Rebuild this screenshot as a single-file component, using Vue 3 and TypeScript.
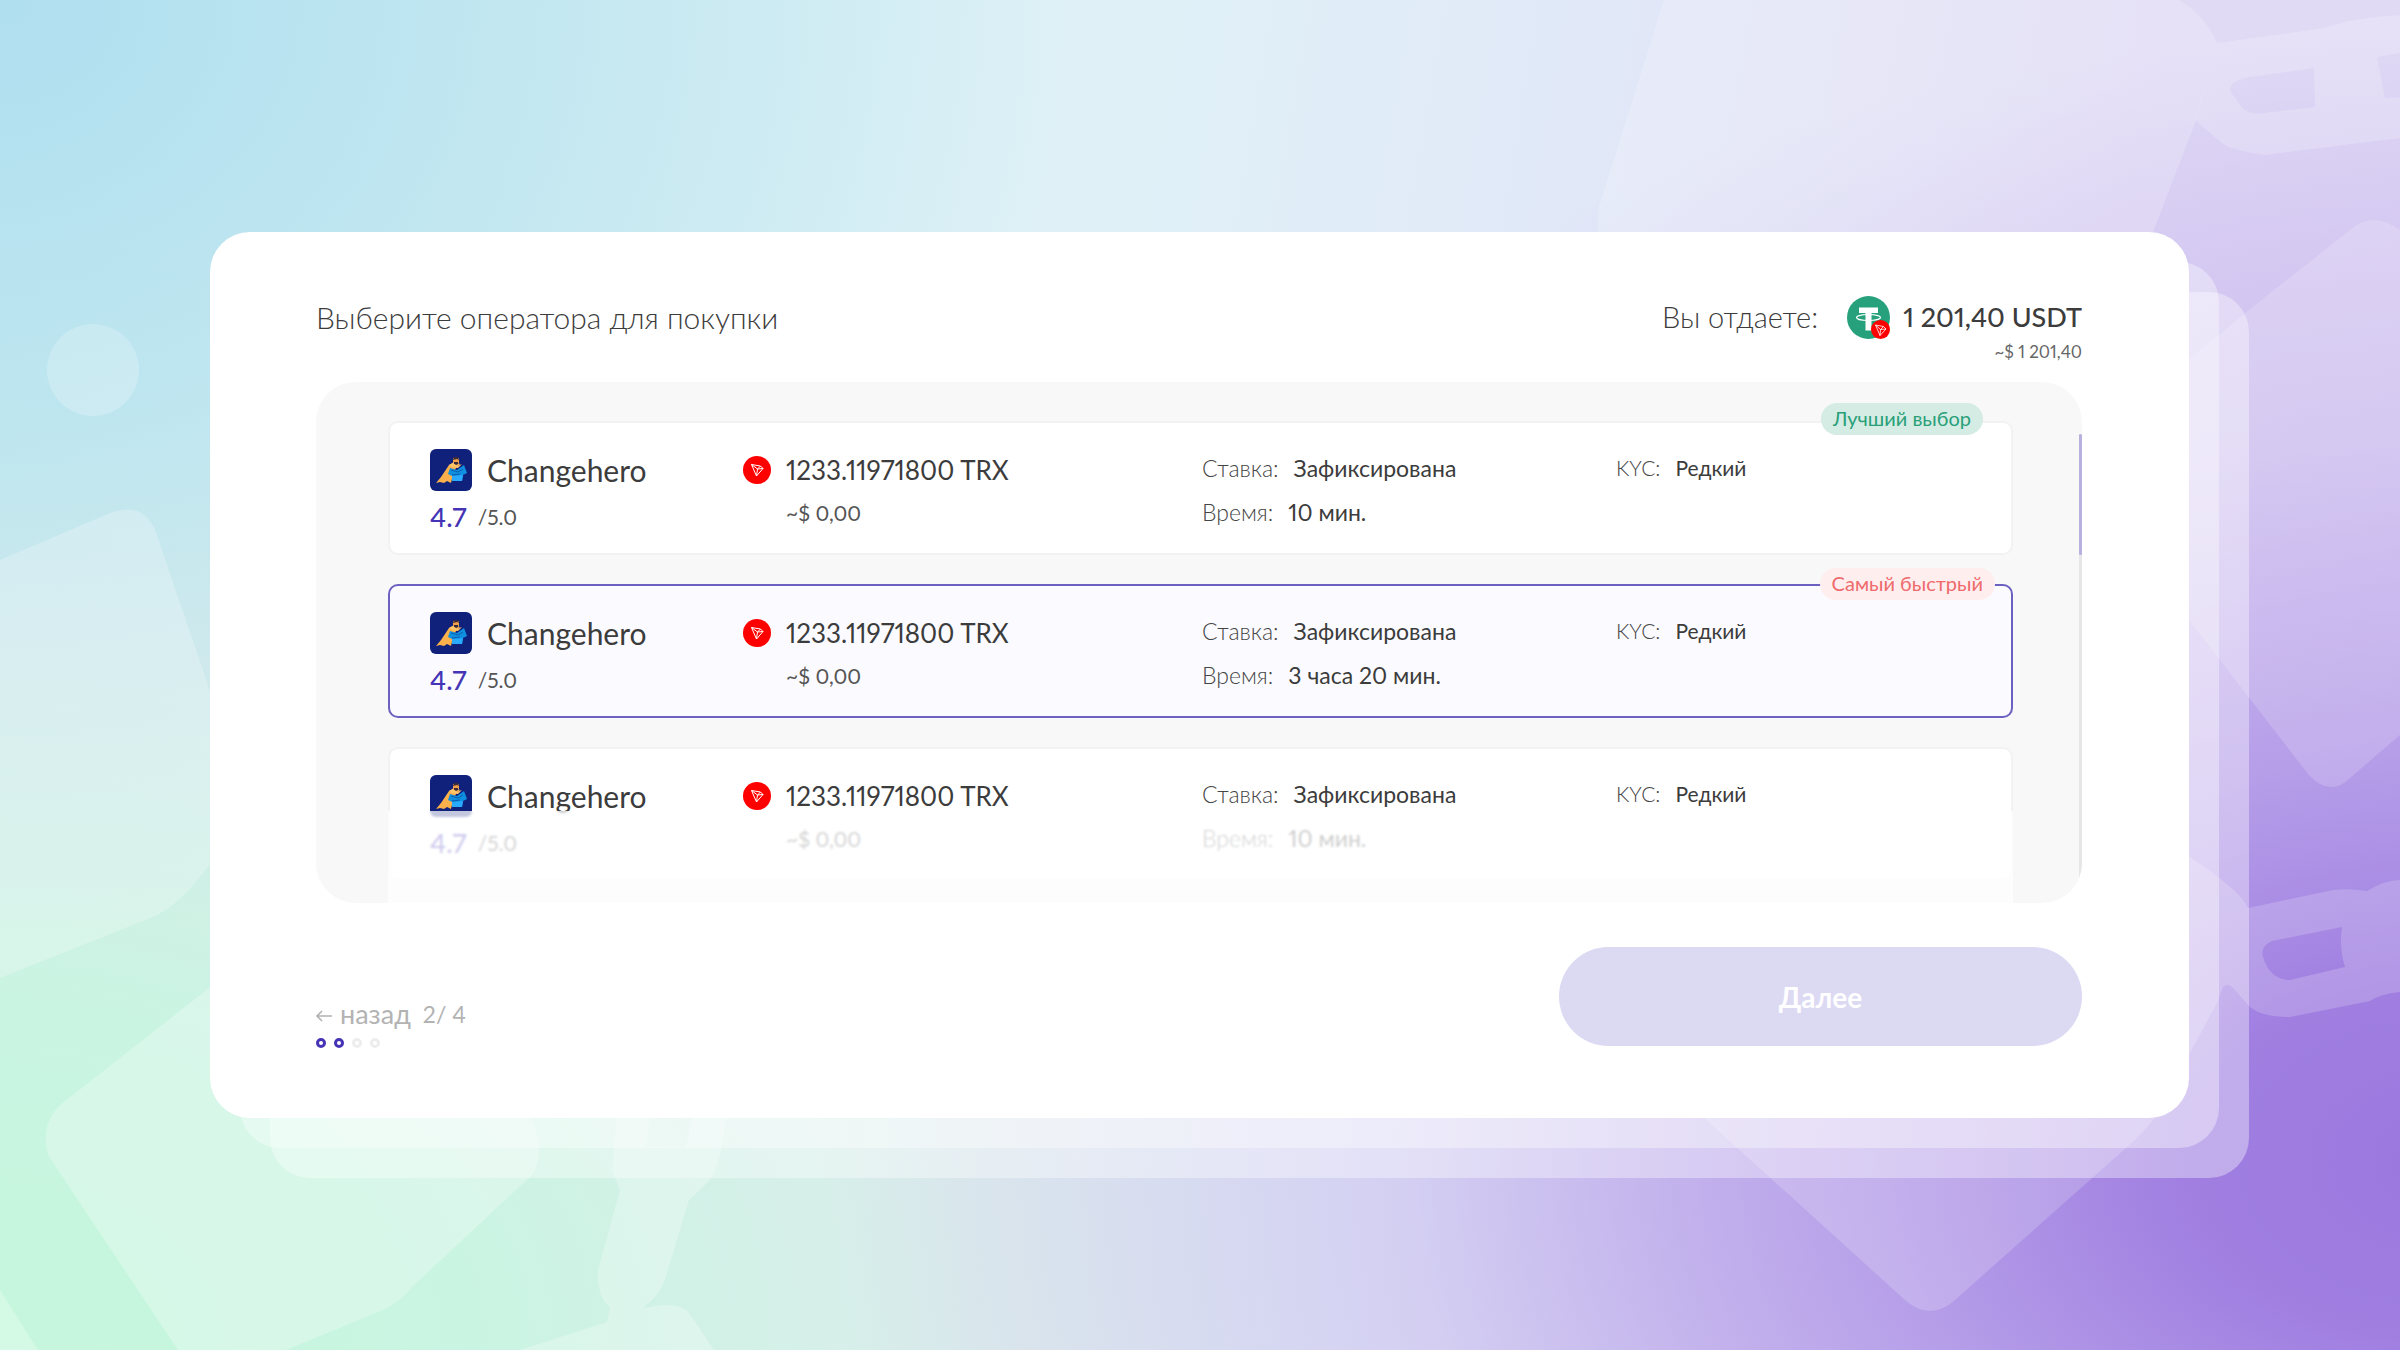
<script setup lang="ts">
import { ref } from 'vue'

interface Offer {
  id: number
  name: string
  rating: string
  amount: string
  fiat: string
  rate: string
  time: string
  kyc: string
  badge?: { text: string; kind: string }
}

const base = {
  name: 'Changehero',
  rating: '4.7',
  amount: '1233.11971800 TRX',
  fiat: '~$ 0,00',
  rate: 'Зафиксирована',
  kyc: 'Редкий',
}

const offers: Offer[] = [
  { ...base, id: 1, time: '10 мин.', badge: { text: 'Лучший выбор', kind: 'best' } },
  { ...base, id: 2, time: '3 часа 20 мин.', badge: { text: 'Самый быстрый', kind: 'fast' } },
  { ...base, id: 3, time: '10 мин.' },
]

const selected = ref(2)
const step = 2
const steps = 4
</script>

<template>
  <div class="page">
    <svg class="scene" viewBox="0 0 2400 1350" preserveAspectRatio="xMidYMid slice" aria-hidden="true">
      <g fill="#fff">
        <circle cx="93" cy="370" r="46" opacity=".22" />
        <path opacity=".24" d="M0 560 L110 513 Q145 500 157 535 L240 780 Q220 850 209 865 Q180 905 153 917 L0 978Z" />
        <path opacity=".27" d="M260 955 Q230 970 209 988 L60 1105 Q40 1125 48 1155 L178 1350 L286 1350 L383 1310 Q400 1302 412 1287 L532 1175 Q548 1150 530 1117 L420 955Z" />
        <path opacity=".25" d="M0 1290 L38 1350 L0 1350Z" />
        <path opacity=".27" fill-rule="evenodd" d="M620 1080 L612 1170 L620 1190 L598 1270 Q597 1298 610 1307 L607 1322 L520 1350 L714 1350 L689 1313 Q680 1300 643 1308 Q660 1295 665 1280 L689 1200 L710 1180 Q722 1160 727 1110 L727 1080Z M655 1090 L645 1147 L686 1147 L698 1090Z" />
        <path opacity=".2" d="M1664 0 L1599 207 L1593 300 L2127 300 L2195 123 L2217 43 Q2205 15 2179 0Z" />
        <path opacity=".2" fill-rule="evenodd" d="M2217 43 L2325 28 Q2350 18 2400 15 L2400 138 L2265 155 Q2230 150 2222 143 L2195 120Z M2314 68 L2250 77 Q2226 82 2231 92 L2241 106 Q2247 115 2264 113 L2315 107Z M2400 53 L2377 57 L2385 98 L2400 97Z" />
        <path opacity=".17" d="M2400 230 Q2375 212 2355 226 L2249 310 L2140 400 L2140 560 L2189 620 L2308 774 Q2330 798 2350 778 L2400 735Z" />
        <path opacity=".19" fill-rule="evenodd" d="M1690 1105 L1905 1300 Q1930 1322 1955 1300 L2135 1140 Q2175 1100 2190 1053 L2217 1003 L2223 987 Q2228 982 2233 988 L2250 1007 Q2262 1017 2290 1017 L2370 1001 Q2380 994 2400 992 L2400 880 Q2385 880 2367 891 Q2350 888 2333 890 L2248 908 Q2240 890 2190 857 L2140 830 L1690 900Z M2342 927 L2272 941 Q2260 946 2263 957 Q2270 980 2290 980 L2345 967 Q2339 948 2342 927Z" />
      </g>
    </svg>

    <main class="card">
      <header class="head">
        <h1>Выберите оператора для покупки</h1>
        <div class="give">
          <div class="give-line">
            <span class="give-label">Вы отдаете:</span>
            <svg class="usdt" viewBox="0 0 43 43" aria-hidden="true">
              <circle cx="21.500" cy="21.500" r="21.500" fill="#26a17b" />
              <path d="M12 11.500H31V17H24.500V34.500H18.500V17H12Z" fill="#fff" />
              <ellipse cx="21.500" cy="21.500" rx="12" ry="3" fill="none" stroke="#fff" stroke-width="1.200" />
              <circle cx="33.500" cy="33.500" r="9.500" fill="#f00" />
              <path d="M28.500 29 36.500 30.500 39 33 33 39.500Z M28.500 29 33.500 33.500 39 33 M36.500 30.500 33.500 33.500 33 39.500" fill="none" stroke="#fff" stroke-width=".8" stroke-linejoin="round" />
            </svg>
            <strong>1 201,40 USDT</strong>
          </div>
          <span class="give-fiat">~$ 1 201,40</span>
        </div>
      </header>

      <section class="panel">
        <div class="list">
          <article
            v-for="o in offers"
            :key="o.id"
            class="offer"
            :class="{ active: o.id === selected }"
            @click="selected = o.id"
          >
            <span v-if="o.badge" class="badge" :class="o.badge.kind">{{ o.badge.text }}</span>
            <div class="operator">
              <div class="name">
                <svg viewBox="0 0 42 42" aria-hidden="true">
                  <rect width="42" height="42" rx="6" fill="#10217c" />
                  <path d="M19 16 L24 13 30 15 26 19 23 25 21 34 17 32 14 34 10 33 6 34 11 28Z" fill="#fbb04c" />
                  <path d="M20 19 L27 21 34 16 37 24 33 26 32 32 22 32 22 27 18 25Z" fill="#0f8fe0" />
                  <path d="M22 27 L33 26 32 32 22 32Z" fill="#2aaaff" />
                  <path d="M21 21 L28 23 33 20 M22 26 L30 25" fill="none" stroke="#0a5eae" />
                  <path d="M23 9 L29 9 29 14 26 16 23 14Z" fill="#f0a04a" />
                  <path d="M23 11 L24 8 28 8 29 11 27 10Z M24 13 L28 13 28 15 26 16 24 15Z" fill="#3b2a3a" />
                  <path d="M19 16 L23 14 27 17 32 15 28 19 22 18Z" fill="#ffc56a" />
                </svg>
                <span>{{ o.name }}</span>
              </div>
              <div class="rating"><b>{{ o.rating }}</b><span>/5.0</span></div>
            </div>
            <div class="quote">
              <svg viewBox="0 0 28 28" aria-hidden="true">
                <circle cx="14" cy="14" r="14" fill="#f00" />
                <path d="M8.500 8.500 17.500 10 20 12.500 13.500 20Z M8.500 8.500 14.500 13 20 12.500 M17.500 10 14.500 13 13.500 20" fill="none" stroke="#fff" stroke-linejoin="round" />
              </svg>
              <span class="amount">{{ o.amount }}</span>
              <span class="fiat">{{ o.fiat }}</span>
            </div>
            <dl class="facts">
              <div><dt>Ставка:</dt><dd>{{ o.rate }}</dd></div>
              <div><dt>Время:</dt><dd>{{ o.time }}</dd></div>
            </dl>
            <dl class="facts kyc">
              <div><dt>KYC:</dt><dd>{{ o.kyc }}</dd></div>
            </dl>
          </article>
        </div>
        <div class="veil"></div>
        <div class="track"><div class="thumb"></div></div>
      </section>

      <footer class="foot">
        <div class="progress">
          <div class="nav">
            <button type="button" class="back">
              <svg viewBox="0 0 16 12" aria-hidden="true">
                <path d="M16 6H1M6 1 1 6l5 5" fill="none" stroke="currentColor" stroke-width="1.600" />
              </svg>
              назад
            </button>
            <span>{{ step }}/ {{ steps }}</span>
          </div>
          <div class="dots">
            <i v-for="n in steps" :key="n" :class="{ on: n <= step }"></i>
          </div>
        </div>
        <button type="button" class="next">Далее</button>
      </footer>
    </main>
  </div>
</template>

<style>
body {
  margin: 0;
}
</style>

<style scoped>
.page {
  position: relative;
  box-sizing: border-box;
  min-height: 100vh;
  padding: 232px 211px 232px 210px;
  overflow: hidden;
  font-family: Lato, "Open Sans", sans-serif;
  font-weight: 400;
  font-variant-numeric: proportional-nums;
  color: #3c3c3c;
  background:
    radial-gradient(ellipse 68% 84% at 102% 86%, #9a77de 0%, #a07fe1 16%, rgba(176, 150, 231, .85) 36%, rgba(198, 182, 236, .5) 64%, rgba(222, 214, 245, 0) 100%),
    radial-gradient(ellipse 38% 40% at 105% 42%, rgba(204, 184, 240, .8), rgba(224, 214, 246, 0)),
    radial-gradient(ellipse 45% 70% at 0% 0%, #b0dff0, rgba(205, 236, 243, 0)),
    radial-gradient(ellipse 60% 70% at -2% 100%, #c5f7dc 0%, rgba(200, 245, 224, .9) 35%, rgba(220, 236, 234, .8) 75%, rgba(216, 238, 238, 0) 100%),
    linear-gradient(100deg, #cdeeed, #dff1f7 42%, #e1e9f8 60%, #e0daf5 82%);
}

.scene {
  position: absolute;
  inset: 0;
  width: 100%;
  height: 100%;
}

.card {
  position: relative;
  box-sizing: border-box;
  padding: 60px 107px 70px 106px;
  border-radius: 40px;
  background: #fff;
  box-shadow: 30px 30px 0 rgba(255, 255, 255, .36), 60px 60px 0 rgba(255, 255, 255, .36);
}

.head {
  display: flex;
  justify-content: space-between;
  height: 90px;
}

h1 {
  margin: 7px 0 0;
  font-size: 30px;
  line-height: 36px;
  font-weight: 300;
}

.give {
  display: flex;
  flex-direction: column;
  align-items: flex-end;
}

.give-line {
  display: flex;
  align-items: center;
  height: 50px;
  font-size: 29px;
  line-height: 36px;
}

.give-label {
  font-weight: 300;
}

.usdt {
  width: 43px;
  height: 43px;
  margin: 0 13px 0 29px;
}

strong {
  font-size: 27px;
  font-weight: 500;
}

.give-fiat {
  font-size: 17px;
  line-height: 20px;
  color: #666;
}

.panel {
  position: relative;
  height: 521px;
  border-radius: 40px;
  overflow: hidden;
  background: #f8f8f8;
}

.list {
  display: flex;
  flex-direction: column;
  gap: 29px;
  padding: 39px 69px 0 72px;
}

.offer {
  position: relative;
  box-sizing: border-box;
  display: grid;
  grid-template-columns: 313px 459px 414px 1fr;
  height: 134px;
  padding: 26px 40px;
  border: 2px solid #f2f2f2;
  border-radius: 10px;
  background: #fff;
  cursor: pointer;
}

.offer.active {
  border-color: #6c60c0;
  background: #fbfbff;
}

.badge {
  position: absolute;
  top: -20px;
  right: 28px;
  padding: 0 12px 2px;
  border-radius: 16px;
  font-size: 20px;
  line-height: 30px;
}

.best {
  color: #2a9f79;
  background: #d4ece4;
}

.fast {
  top: -18px;
  right: 16px;
  color: #ee6a6c;
  background: #feeeee;
}

.name {
  display: flex;
  align-items: center;
  gap: 15px;
  height: 42px;
  font-size: 30px;
}

.name svg {
  width: 42px;
  height: 42px;
}

.rating {
  display: flex;
  align-items: center;
  gap: 11px;
  margin-top: 8px;
  font-size: 21px;
  line-height: 36px;
  color: #555;
}

.rating b {
  font-size: 27px;
  font-weight: 500;
  color: #4534b6;
}

.quote {
  display: grid;
  grid-template-columns: 28px 1fr;
  grid-template-rows: 42px 42px;
  column-gap: 15px;
  align-items: center;
  align-content: start;
}

.quote svg {
  width: 28px;
  height: 28px;
}

.amount {
  font-size: 26px;
}

.fiat {
  grid-column: 2;
  font-size: 21px;
  color: #555;
}

.facts {
  margin: 0;
  font-size: 23px;
}

.kyc {
  font-size: 21px;
}

.facts div {
  display: flex;
  gap: 15px;
  height: 44px;
  line-height: 38px;
}

dt {
  font-weight: 300;
  color: #444;
}

dd {
  margin: 0;
}

.veil {
  position: absolute;
  left: 72px;
  right: 69px;
  bottom: 0;
  height: 92px;
  background: rgba(255, 255, 255, .75);
  backdrop-filter: blur(1px);
}

.track {
  position: absolute;
  top: 52px;
  right: 0;
  bottom: 0;
  width: 3px;
  background: #e6e6e8;
}

.thumb {
  height: 121px;
  border-radius: 2px;
  background: #b8b0de;
}

.foot {
  display: flex;
  justify-content: space-between;
  margin-top: 44px;
}

.progress {
  padding-top: 51px;
}

.nav {
  display: flex;
  align-items: center;
  gap: 12px;
  height: 32px;
  font-size: 23px;
  line-height: 32px;
  color: #b3b3b3;
}

.back {
  display: flex;
  align-items: center;
  gap: 8px;
  padding: 0;
  border: 0;
  background: none;
  font: inherit;
  font-size: 27px;
  color: inherit;
  cursor: pointer;
}

.back svg {
  width: 16px;
  height: 12px;
  margin-top: 4px;
}

.dots {
  display: flex;
  gap: 8px;
  margin-top: 8px;
}

.dots i {
  box-sizing: border-box;
  width: 10px;
  height: 10px;
  border: 3px solid #ededed;
  border-radius: 50%;
}

.dots .on {
  border-color: #4534b6;
}

.next {
  width: 523px;
  height: 99px;
  border: 0;
  border-radius: 50px;
  background: #dcd9f3;
  font: 700 28px/36px Lato, sans-serif;
  color: #fff;
  cursor: pointer;
}
</style>
